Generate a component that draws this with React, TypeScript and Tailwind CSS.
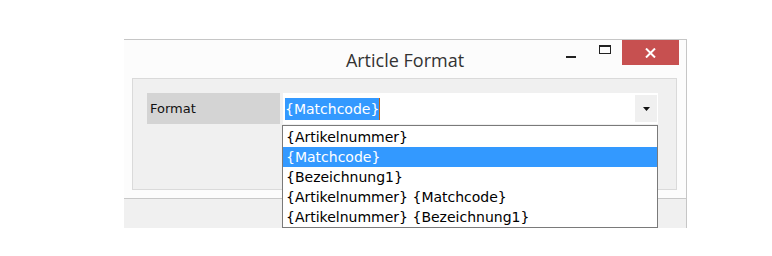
import { useState } from 'react';

const options = [
  '{Artikelnummer}',
  '{Matchcode}',
  '{Bezeichnung1}',
  '{Artikelnummer} {Matchcode}',
  '{Artikelnummer} {Bezeichnung1}',
];

export default function App() {
  const [selected, setSelected] = useState(1);

  return (
    <div className="w-[772px] h-[256px] bg-white pt-[39px] pl-[124px] font-['DejaVu_Sans',sans-serif]">
      <div className="w-[563px] h-[189px] flex flex-col bg-[#fcfcfc] border-t border-r border-[#c6c6c6]">
        {/* title bar */}
        <div className="grid grid-cols-3 h-[38px]">
          <div />
          <div className="flex justify-center pt-[8px]">
            <span className="font-['Open_Sans',sans-serif] text-[18px] leading-[24px] text-[#333]">Article Format</span>
          </div>
          <div className="flex justify-end pr-[7px]">
            <button className="w-[33px] h-[25px] flex items-center justify-start">
              <span className="w-[10px] h-[2px] bg-[#222] mt-[8px]" />
            </button>
            <button className="w-[23px] h-[25px] flex items-center justify-start">
              <span className="w-[12px] h-[9px] border border-t-2 border-[#222] mb-[7px]" />
            </button>
            <button className="w-[57px] h-[25px] bg-[#c75050] flex items-center justify-center">
              <svg width="11" height="10" viewBox="0 0 11 10">
                <path d="M1 0.5 L10 9.5 M10 0.5 L1 9.5" stroke="#fff" strokeWidth="2" />
              </svg>
            </button>
          </div>
        </div>

        {/* group box */}
        <div className="ml-[8px] w-[545px] h-[112px] bg-[#f0f0f0] border border-[#dadada] pt-[14px] pl-[14px]">
          <div className="flex gap-[3px]">
            <div className="w-[133px] h-[31px] bg-[#d4d4d4] flex items-center pl-[3px] text-[13px] text-[#111]">
              Format
            </div>
            <div className="relative w-[375px] h-[31px] bg-white flex items-center justify-between">
              <span className="ml-[2px] flex items-center">
                <span className="bg-[#3399ff] text-white text-[14px] leading-[22px]">{options[selected]}</span>
                <span className="w-[1px] h-[22px] bg-[#c06010]" />
              </span>
              <div className="mr-[1px] w-[22px] h-[27px] bg-[#f0f0f0] flex items-center justify-center">
                <svg width="7" height="4" viewBox="0 0 7 4">
                  <path d="M0 0 H7 L3.5 4 Z" fill="#111" />
                </svg>
              </div>

              <ul className="absolute top-[32px] left-[-1px] w-[376px] h-[103px] bg-white border border-[#7a7a7a] pt-[1px]">
                {options.map((opt, i) => (
                  <li
                    key={opt}
                    onClick={() => setSelected(i)}
                    className={`h-[20px] pl-[3px] text-[14px] leading-[20px] ${
                      i === selected ? 'bg-[#3399ff] text-white' : 'text-black'
                    }`}
                  >
                    {opt}
                  </li>
                ))}
              </ul>
            </div>
          </div>
        </div>

        <div className="h-[8px]" />
        <div className="flex-1 bg-[#f0f0f0] border-t border-[#c8c8c8]" />
      </div>
    </div>
  );
}
